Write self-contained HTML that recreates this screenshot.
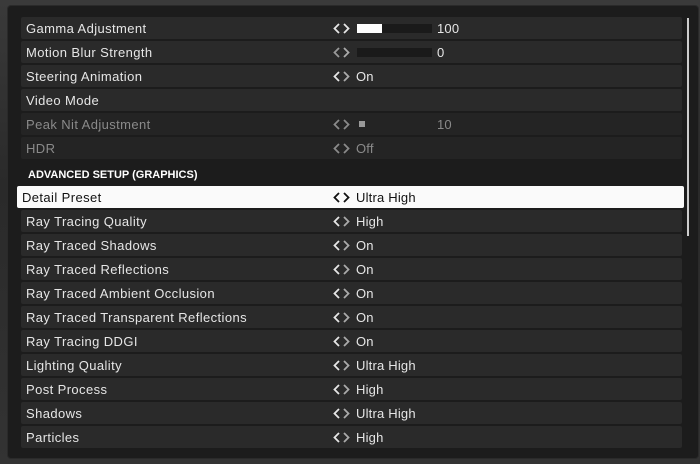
<!DOCTYPE html>
<html><head><meta charset="utf-8"><style>
*{margin:0;padding:0;box-sizing:border-box}
body{width:700px;height:464px;overflow:hidden;background:#2e2e2e;font-family:"Liberation Sans",sans-serif;position:relative}
.bg{position:absolute;inset:0;background:linear-gradient(180deg,#3a3a3a 0,#2a2a2a 40%,#333 100%)}
.panel{position:absolute;left:8px;top:6px;width:690px;height:452px;background:#1c1c1c;border-radius:3px;box-shadow:0 0 0 1px #2a2a2a}
.row{position:absolute;left:21px;width:661px;height:22px;background:#2a2a2a;border-radius:2px;color:#e6e6e6;font-size:13px;line-height:23px}
.row .l{position:absolute;left:5px;top:0;letter-spacing:0.4px}
.row .ar{position:absolute;left:312px;top:6px;width:18px;height:11px}
.row .v{position:absolute;left:335px;top:0;letter-spacing:0.2px}
.dim{color:#8a8a8a}
.sel{left:17px;width:667px;background:#fafafa;color:#111}
.sel .ar{left:316px}.sel .v{left:339px}
.hdr{position:absolute;left:28px;top:169px;color:#fff;font-weight:bold;font-size:11px}
.bar{position:absolute;left:336px;top:7px;width:75px;height:9px;background:#1a1a1a}
.scroll{position:absolute;left:687px;top:18px;width:2px;height:218px;background:#ccc}
</style></head><body>
<div class="bg"></div>
<div class="panel"></div>
<div class="scroll"></div>
<svg width="0" height="0" style="position:absolute"><defs>
<g id="a"><path d="M6 1L1.5 5.5L6 10" fill="none" stroke="currentColor" stroke-width="1.8"/><path d="M11 1L15.5 5.5L11 10" fill="none" stroke="currentColor" stroke-width="1.8"/></g>
<g id="b"><path d="M6 1L1.5 5.5L6 10" fill="none" stroke="currentColor" stroke-width="1.8"/><path d="M11 1L15.5 5.5L11 10" fill="none" stroke="#aaa" stroke-width="1.8"/></g>
</defs></svg>

<div class="row" style="top:17px"><span class="l">Gamma Adjustment</span><svg class="ar"><use href="#a"/></svg><div class="bar"><div style="width:25px;height:9px;background:#fff"></div></div><span class="v" style="left:416px">100</span></div>
<div class="row" style="top:41px"><span class="l">Motion Blur Strength</span><svg class="ar" style="color:#999"><use href="#b"/></svg><div class="bar"></div><span class="v" style="left:416px">0</span></div>
<div class="row" style="top:65px"><span class="l">Steering Animation</span><svg class="ar"><use href="#b"/></svg><span class="v">On</span></div>
<div class="row" style="top:89px"><span class="l">Video Mode</span></div>
<div class="row dim" style="top:113px;background:#242424"><span class="l">Peak Nit Adjustment</span><svg class="ar"><use href="#a"/></svg><div style="position:absolute;left:338px;top:8px;width:6px;height:6px;background:#999"></div><span class="v" style="left:416px">10</span></div>
<div class="row dim" style="top:137px;background:#242424"><span class="l">HDR</span><svg class="ar"><use href="#a"/></svg><span class="v">Off</span></div>
<div class="hdr">ADVANCED SETUP (GRAPHICS)</div>
<div class="row sel" style="top:186px"><span class="l">Detail Preset</span><svg class="ar"><use href="#a"/></svg><span class="v">Ultra High</span></div>
<div class="row" style="top:210px"><span class="l">Ray Tracing Quality</span><svg class="ar"><use href="#b"/></svg><span class="v">High</span></div>
<div class="row" style="top:234px"><span class="l">Ray Traced Shadows</span><svg class="ar"><use href="#b"/></svg><span class="v">On</span></div>
<div class="row" style="top:258px"><span class="l">Ray Traced Reflections</span><svg class="ar"><use href="#b"/></svg><span class="v">On</span></div>
<div class="row" style="top:282px"><span class="l">Ray Traced Ambient Occlusion</span><svg class="ar"><use href="#b"/></svg><span class="v">On</span></div>
<div class="row" style="top:306px"><span class="l">Ray Traced Transparent Reflections</span><svg class="ar"><use href="#b"/></svg><span class="v">On</span></div>
<div class="row" style="top:330px"><span class="l">Ray Tracing DDGI</span><svg class="ar"><use href="#b"/></svg><span class="v">On</span></div>
<div class="row" style="top:354px"><span class="l">Lighting Quality</span><svg class="ar"><use href="#b"/></svg><span class="v">Ultra High</span></div>
<div class="row" style="top:378px"><span class="l">Post Process</span><svg class="ar"><use href="#b"/></svg><span class="v">High</span></div>
<div class="row" style="top:402px"><span class="l">Shadows</span><svg class="ar"><use href="#b"/></svg><span class="v">Ultra High</span></div>
<div class="row" style="top:426px"><span class="l">Particles</span><svg class="ar"><use href="#b"/></svg><span class="v">High</span></div>
</body></html>
